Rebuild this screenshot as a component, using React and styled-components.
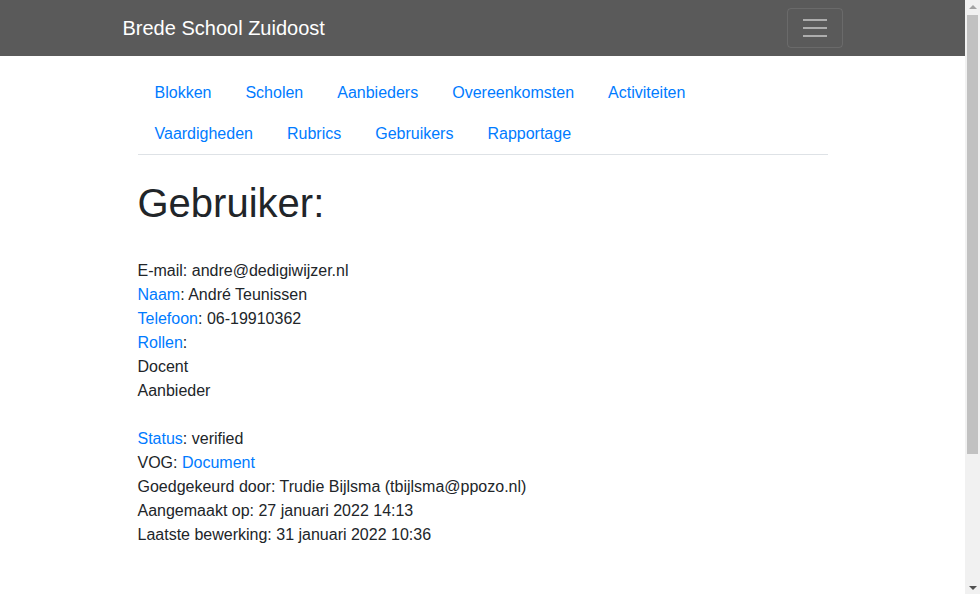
import styled, { createGlobalStyle } from "styled-components";

const GlobalStyle = createGlobalStyle`
  body {
    margin: 0;
    font-family: "Liberation Sans", Arial, sans-serif;
    font-size: 16px;
    line-height: 1.5;
    color: #212529;
    background: #fff;
    overflow: hidden;
  }
`

const menu = [
  "Blokken",
  "Scholen",
  "Aanbieders",
  "Overeenkomsten",
  "Activiteiten",
  "Vaardigheden",
  "Rubrics",
  "Gebruikers",
  "Rapportage",
]

function App() {
  return (
    <Viewport>
      <GlobalStyle />
      <Page>
        <Navbar>
          <NavInner>
            <Brand href="#">Brede School Zuidoost</Brand>
            <Toggler aria-label="menu">
              <span />
              <span />
              <span />
            </Toggler>
          </NavInner>
        </Navbar>
        <Container>
          <Tabs>
            {menu.map((item) => (
              <TabLink key={item} href="#">{item}</TabLink>
            ))}
          </Tabs>
          <Title>Gebruiker:</Title>
          <Details>
            <Line>E-mail: andre@dedigiwijzer.nl</Line>
            <Line><Label>Naam</Label>: André Teunissen</Line>
            <Line><Label>Telefoon</Label>: 06-19910362</Line>
            <Line><Label>Rollen</Label>:</Line>
            <Line>Docent</Line>
            <Line>Aanbieder</Line>
            <Line />
            <Line><Label>Status</Label>: verified</Line>
            <Line>VOG: <Label as="a" href="#">Document</Label></Line>
            <Line>Goedgekeurd door: Trudie Bijlsma (tbijlsma@ppozo.nl)</Line>
            <Line>Aangemaakt op: 27 januari 2022 14:13</Line>
            <Line>Laatste bewerking: 31 januari 2022 10:36</Line>
          </Details>
        </Container>
      </Page>
      <Scrollbar>
        <Arrow />
        <Thumb />
        <Arrow down />
      </Scrollbar>
    </Viewport>
  )
}

export default App;

const Viewport = styled.div`
  display: flex;
  height: 594px;
  overflow: hidden;
`

const Page = styled.div`
  flex: 1;
  min-width: 0;
`

const Scrollbar = styled.div`
  width: 15px;
  flex: none;
  background: #f1f1f1;
  display: flex;
  flex-direction: column;
  align-items: center;
`

const Arrow = styled.div`
  height: 15px;
  width: 15px;
  flex: none;
  display: flex;
  align-items: center;
  justify-content: center;

  &::before {
    content: "";
    border-left: 4px solid transparent;
    border-right: 4px solid transparent;
    ${(p) => p.down
      ? "border-top: 4px solid #505050; margin-top: 2px;"
      : "border-bottom: 4px solid #a3a3a3; margin-top: -2px;"}
  }
`

const Thumb = styled.div`
  width: 11px;
  height: 439px;
  background: #c1c1c1;
  margin-bottom: auto;
`

const Navbar = styled.nav`
  background-color: #5a5a5a;
  height: 56px;
  display: flex;
  align-items: center;
`

const NavInner = styled.div`
  width: 720px;
  margin: 0 auto;
  display: flex;
  align-items: center;
  justify-content: space-between;
`

const Brand = styled.a`
  color: #fff;
  font-size: 20px;
  line-height: 30px;
  text-decoration: none;
`

const Toggler = styled.button`
  width: 56px;
  height: 40px;
  box-sizing: border-box;
  background: transparent;
  border: 1px solid rgba(255, 255, 255, 0.1);
  border-radius: 4px;
  display: flex;
  flex-direction: column;
  align-items: center;
  justify-content: center;
  gap: 6px;
  padding: 0;

  span {
    display: block;
    width: 24px;
    height: 2px;
    background: rgba(255, 255, 255, 0.5);
  }
`

const Container = styled.div`
  width: 720px;
  box-sizing: border-box;
  padding: 0 15px;
  margin: 0 auto;
`

const Tabs = styled.nav`
  margin-top: 16px;
  display: flex;
  flex-wrap: wrap;
  border-bottom: 1px solid #dee2e6;
`

const TabLink = styled.a`
  display: block;
  padding: 8px 16px;
  border: 1px solid transparent;
  margin-bottom: -1px;
  color: #007bff;
  text-decoration: none;
`

const Title = styled.h1`
  font-size: 40px;
  font-weight: 500;
  line-height: 1.2;
  margin: 24px 0 32px;
`

const Details = styled.div`
  display: flex;
  flex-direction: column;
`

const Line = styled.div`
  height: 24px;
`

const Label = styled.span`
  color: #007bff;
  text-decoration: none;
`
